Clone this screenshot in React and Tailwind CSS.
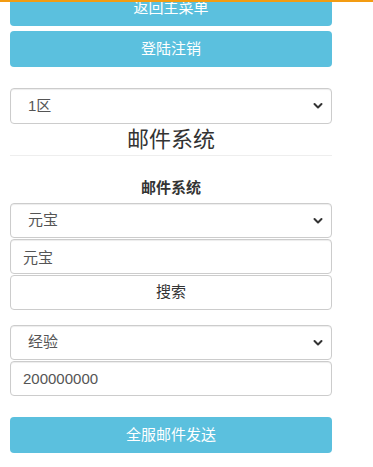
import { useState } from 'react';

const font = { fontFamily: '"Liberation Sans", "Noto Sans CJK SC", sans-serif' };

function Chevron() {
  return (
    <svg className="pointer-events-none absolute right-[9px] top-1/2 -translate-y-1/2" width="10" height="7" viewBox="0 0 10 7">
      <path d="M1.5 1.5 L5 5 L8.5 1.5" fill="none" stroke="#333" strokeWidth="2" strokeLinecap="round" strokeLinejoin="round" />
    </svg>
  );
}

function SelectBox({ value, options, onChange, className }) {
  return (
    <div className={`relative ${className}`}>
      <select
        value={value}
        onChange={(e) => onChange(e.target.value)}
        className="h-full w-full appearance-none rounded-[4px] border border-[#ccc] bg-white pl-[17px] pr-8 text-[15px] text-[#555] outline-none shadow-[inset_0_1px_1px_rgba(0,0,0,0.075)]"
      >
        {options.map((o) => (
          <option key={o} value={o}>{o}</option>
        ))}
      </select>
      <Chevron />
    </div>
  );
}

export default function App() {
  const [zone, setZone] = useState('1区');
  const [item, setItem] = useState('元宝');
  const [keyword, setKeyword] = useState('元宝');
  const [kind, setKind] = useState('经验');
  const [amount, setAmount] = useState('200000000');

  return (
    <div className="relative min-h-[467px] overflow-hidden bg-white" style={font}>
      {/* top navbar edge */}
      <div className="absolute left-0 right-0 top-0 z-10 h-[2px] bg-[#f39c12]" />

      <div className="flex w-[342px] flex-col px-[10px]">
        <button className="-mt-[10px] h-[36px] rounded-[4px] bg-[#5bc0de] text-[15px] text-white">返回主菜单</button>
        <button className="mt-[5px] h-[36px] rounded-[4px] bg-[#5bc0de] text-[15px] text-white">登陆注销</button>

        <SelectBox className="mt-[21px] h-[36px]" value={zone} options={['1区', '2区', '3区']} onChange={setZone} />

        <h3 className="flex h-[31px] items-center justify-center text-[22px] text-[#333]">邮件系统</h3>
        <div className="border-t border-[#eee]" />

        <div className="mt-[22px] flex h-[20px] items-center justify-center text-[15px] font-bold text-[#333]">邮件系统</div>

        <div className="mt-[5px] flex flex-col gap-[1px]">
          <SelectBox className="h-[35px]" value={item} options={['元宝', '金币', '经验']} onChange={setItem} />
          <input
            value={keyword}
            onChange={(e) => setKeyword(e.target.value)}
            className="h-[35px] rounded-[4px] border border-[#ccc] px-[12px] text-[15px] text-[#555] outline-none shadow-[inset_0_1px_1px_rgba(0,0,0,0.075)]"
          />
          <button className="h-[35px] rounded-[4px] border border-[#ccc] bg-white text-[15px] text-[#333]">搜索</button>
        </div>

        <div className="mt-[15px] flex flex-col gap-[1px]">
          <SelectBox className="h-[35px]" value={kind} options={['经验', '元宝', '金币']} onChange={setKind} />
          <input
            value={amount}
            onChange={(e) => setAmount(e.target.value)}
            className="h-[35px] rounded-[4px] border border-[#ccc] px-[12px] text-[15px] text-[#555] outline-none shadow-[inset_0_1px_1px_rgba(0,0,0,0.075)]"
          />
        </div>

        <button className="mt-[21px] h-[36px] rounded-[4px] bg-[#5bc0de] text-[15px] text-white">全服邮件发送</button>
      </div>
    </div>
  );
}
